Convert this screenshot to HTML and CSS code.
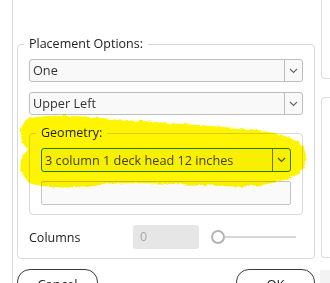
FILE: index.html
```html
<!DOCTYPE html>
<html>
<head>
<meta charset="utf-8">
<link rel="stylesheet" href="styles.css">
</head>
<body>
<div class="page">
  <div class="left">
    <fieldset class="group outer">
      <legend>Placement Options:</legend>
      <div class="select">
        <span class="value">One</span>
        <span class="arrow"><svg width="9" height="6" viewBox="0 0 9 6"><path d="M1 1 L4.5 4.5 L8 1" fill="none" stroke="#666" stroke-width="1.1"/></svg></span>
      </div>
      <div class="select gap">
        <span class="value">Upper Left</span>
        <span class="arrow"><svg width="9" height="6" viewBox="0 0 9 6"><path d="M1 1 L4.5 4.5 L8 1" fill="none" stroke="#666" stroke-width="1.1"/></svg></span>
      </div>
      <fieldset class="group inner">
        <legend>Geometry:</legend>
        <div class="select focus">
          <span class="value">3 column 1 deck head 12 inches</span>
          <span class="arrow"><svg width="9" height="6" viewBox="0 0 9 6"><path d="M1 1 L4.5 4.5 L8 1" fill="none" stroke="#555" stroke-width="1.2"/></svg></span>
        </div>
        <div class="textbox"></div>
      </fieldset>
      <div class="row">
        <span class="label">Columns</span>
        <span class="number">0</span>
        <span class="slider"><span class="knob"></span><span class="track"></span></span>
      </div>
    </fieldset>
    <div class="buttons">
      <button class="btn cancel">Cancel</button>
      <button class="btn ok">OK</button>
    </div>
  </div>
  <div class="right">
    <div class="panel top"></div>
    <div class="panel mid"></div>
    <div class="panel foot"></div>
  </div>
</div>
<svg class="highlight" width="330" height="283" viewBox="0 0 330 283">
  <defs>
    <filter id="rough" x="-5%" y="-10%" width="110%" height="120%">
      <feTurbulence type="fractalNoise" baseFrequency="0.18" numOctaves="2" seed="3" result="n"/>
      <feDisplacementMap in="SourceGraphic" in2="n" scale="4" xChannelSelector="R" yChannelSelector="G"/>
    </filter>
  </defs>
  <path filter="url(#rough)" fill="#fff500" d="M 31 118 C 45 115, 70 115, 100 118 C 140 121, 200 125, 250 129 C 275 132, 293 137, 301 144 C 308 152, 308 166, 299 173 C 291 180, 270 185, 240 187 C 200 185, 140 182, 100 184 C 80 188, 50 189, 32 184 C 23 181, 19 170, 21 160 C 22 154, 26 151, 28 149 C 23 146, 20 138, 21 130 C 22 123, 26 119, 31 118 Z"/>
</svg>
</body>
</html>
```
FILE: styles.css
```css
html, body {
  margin: 0;
  padding: 0;
}
body {
  width: 330px;
  height: 283px;
  overflow: hidden;
  background: #ffffff;
  font-family: "Open Sans", "DejaVu Sans", sans-serif;
  font-size: 12.5px;
  color: #222222;
  position: relative;
}
.page {
  display: flex;
  height: 283px;
}
.left {
  flex: none;
  width: 298px;
  margin-left: 12px;
  border-left: 1px solid #dcdcdc;
  padding: 36px 0 0 4px;
}
.group {
  margin: 0;
  border: 1px solid #d9d9d9;
  border-radius: 4px;
  box-sizing: border-box;
  min-width: 0;
}
.outer {
  width: 298px;
  padding: 7px 11px 9px 11px;
}
.inner {
  width: 274px;
  margin-top: 10px;
  padding: 7px 11px 9px 11px;
}
legend {
  padding: 0 5px;
  margin-left: -5px;
  font-size: 12.5px;
  line-height: 16px;
  color: #222222;
}
.select {
  display: flex;
  height: 23px;
  box-sizing: border-box;
  border: 1px solid #bdbdbd;
  border-radius: 3px;
  background: #f9f9f9;
}
.select.gap {
  margin-top: 10px;
}
.select .value {
  flex: 1;
  padding-left: 3px;
  line-height: 21px;
  font-size: 12.7px;
  color: #333333;
  white-space: nowrap;
  overflow: hidden;
}
.select .arrow {
  flex: none;
  width: 17px;
  border-left: 1px solid #bdbdbd;
  display: flex;
  align-items: center;
  justify-content: center;
}
.select.focus {
  border-color: #2c7a1e;
  height: 24px;
}
.select.focus .arrow {
  border-left-color: #6a7a50;
}
.select.focus .value {
  line-height: 22px;
  color: #444444;
}
.textbox {
  margin-top: 9px;
  height: 24px;
  box-sizing: border-box;
  border: 1px solid #c4c4c4;
  border-radius: 2px;
  background: #fafafa;
}
.row {
  display: flex;
  align-items: center;
  margin-top: 10px;
  height: 24px;
}
.label {
  width: 104px;
  flex: none;
}
.number {
  flex: none;
  width: 66px;
  height: 24px;
  box-sizing: border-box;
  padding-left: 7px;
  line-height: 24px;
  background: #e6e6e6;
  border-radius: 3px;
  color: #a8a8a8;
}
.slider {
  display: flex;
  align-items: center;
  margin-left: 12px;
}
.knob {
  width: 14px;
  height: 14px;
  box-sizing: border-box;
  border: 2px solid #b4b4b4;
  border-radius: 50%;
  background: #ffffff;
}
.track {
  width: 71px;
  height: 2px;
  background: #d6d6d6;
}
.buttons {
  display: flex;
  justify-content: space-between;
  margin-top: 10px;
}
.btn {
  height: 27px;
  box-sizing: border-box;
  border: 1.5px solid #3a3a3a;
  border-radius: 13px;
  background: #ffffff;
  font-family: "Open Sans", "DejaVu Sans", sans-serif;
  font-size: 13px;
  color: #222222;
  padding: 3px 0 0 0;
  line-height: 16px;
  text-align: center;
  vertical-align: top;
}
.cancel {
  width: 81px;
}
.ok {
  width: 79px;
}
.right {
  flex: 1;
  margin-left: 6px;
}
.panel {
  box-sizing: border-box;
}
.top {
  height: 79px;
  border-left: 1px solid #dcdcdc;
  border-bottom: 1px solid #dcdcdc;
  border-bottom-left-radius: 4px;
}
.mid {
  margin-top: 18px;
  height: 161px;
  border-left: 1px solid #dcdcdc;
  border-top: 1px solid #dcdcdc;
  border-bottom: 1px solid #dcdcdc;
  border-radius: 4px 0 0 4px;
}
.foot {
  margin-top: 12px;
  margin-left: -1px;
  height: 20px;
  background: #f3f3f3;
}
.highlight {
  position: absolute;
  left: 0;
  top: 0;
  pointer-events: none;
  mix-blend-mode: multiply;
}
```
